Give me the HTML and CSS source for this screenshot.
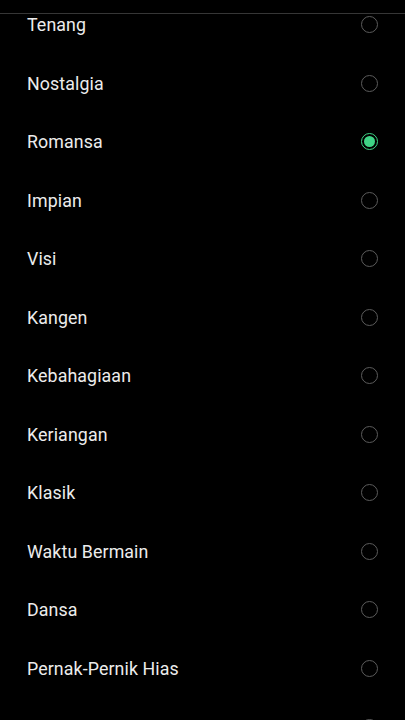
FILE: index.html
```html
<!DOCTYPE html>
<html lang="id">
<head>
<meta charset="utf-8">
<link rel="stylesheet" href="styles.css">
</head>
<body>
<div class="screen">
  <div class="topbar"></div>
  <div class="viewport">
    <ul class="list">
      <li class="row"><span class="label">Tenang</span><span class="radio"></span></li>
      <li class="row"><span class="label">Nostalgia</span><span class="radio"></span></li>
      <li class="row"><span class="label">Romansa</span><span class="radio checked"></span></li>
      <li class="row"><span class="label">Impian</span><span class="radio"></span></li>
      <li class="row"><span class="label">Visi</span><span class="radio"></span></li>
      <li class="row"><span class="label">Kangen</span><span class="radio"></span></li>
      <li class="row"><span class="label">Kebahagiaan</span><span class="radio"></span></li>
      <li class="row"><span class="label">Keriangan</span><span class="radio"></span></li>
      <li class="row"><span class="label">Klasik</span><span class="radio"></span></li>
      <li class="row"><span class="label">Waktu Bermain</span><span class="radio"></span></li>
      <li class="row"><span class="label">Dansa</span><span class="radio"></span></li>
      <li class="row"><span class="label">Pernak-Pernik Hias</span><span class="radio"></span></li>
      <li class="row"><span class="label"></span><span class="radio"></span></li>
    </ul>
  </div>
</div>
</body>
</html>
```
FILE: styles.css
```css
html, body {
  margin: 0;
  padding: 0;
  background: #000;
}
.screen {
  width: 405px;
  height: 720px;
  overflow: hidden;
  display: flex;
  flex-direction: column;
  font-family: Roboto, "Noto Sans", sans-serif;
}
.topbar {
  height: 13px;
  flex: none;
  border-bottom: 1.5px solid #363636;
}
.viewport {
  flex: 1;
  overflow: hidden;
}
.list {
  list-style: none;
  margin: -18.75px 0 0 0;
  padding: 0;
}
.row {
  height: 58.55px;
  display: flex;
  align-items: center;
  justify-content: space-between;
  padding: 0 27px 0 27px;
}
.label {
  color: #ececec;
  font-size: 17.8px;
  letter-spacing: 0.1px;
}
.radio {
  width: 15px;
  height: 15px;
  border: 1.6px solid #5c5c5c;
  border-radius: 50%;
  position: relative;
  flex: none;
}
.radio.checked {
  border-color: #3fd486;
}
.radio.checked::after {
  content: "";
  position: absolute;
  left: 2px;
  top: 2px;
  width: 11px;
  height: 11px;
  border-radius: 50%;
  background: #3fd486;
}
```
